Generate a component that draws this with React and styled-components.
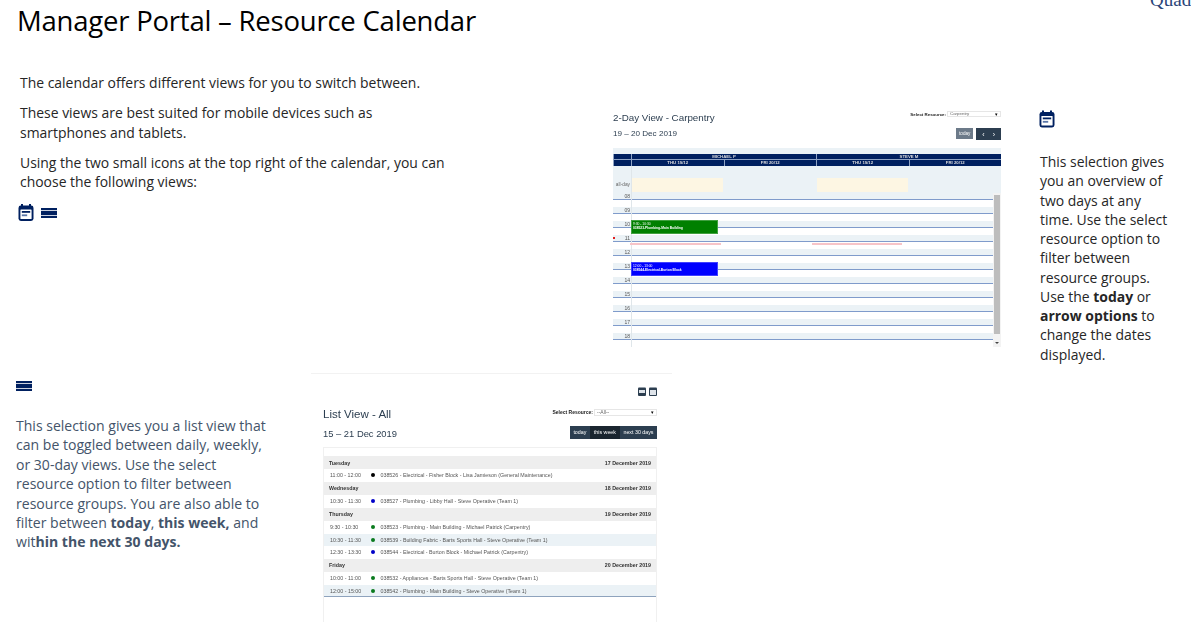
import React from "react";
import styled, { createGlobalStyle } from "styled-components";

const Global = createGlobalStyle`
  html, body { margin: 0; padding: 0; background: #fff; }
  body { font-family: "Open Sans", "Liberation Sans", sans-serif; overflow: hidden; }
  * { box-sizing: border-box; }
`;

const Page = styled.div`
  position: relative; width: 1191px; height: 622px; overflow: hidden; background: #fff;
  display: flex; flex-direction: column;
`;
const LogoText = styled.div`
  position: absolute; right: 0; top: -10px; width: 41px; overflow: hidden; white-space: nowrap;
  font: 19px/20px "Liberation Serif", serif; color: #2a4478;
`;
const Title = styled.h1`
  margin: 0; height: 73px; padding: 3px 0 0 17px; font-weight: 400; font-size: 27.5px; line-height: 36px;
  color: #000; font-family: "Open Sans", sans-serif; letter-spacing: -0.22px;
`;
const TopRow = styled.section`
  height: 300px; display: grid; grid-template-columns: 613px 388px 1fr;
`;
const Intro = styled.div`
  padding-left: 20px; width: 450px; display: flex; flex-direction: column; gap: 11px;
`;
const Para = styled.p`
  margin: 0; font-size: 13.95px; line-height: 19.25px; color: ${p => p.$color || "#262626"};
`;
const IconRow = styled.div`
  display: flex; align-items: center; gap: 7px; margin: 2px 0 0 -2px;
`;
const Side = styled.aside`
  padding: 37px 0 0 38px; display: flex; flex-direction: column;
`;
const SideText = styled(Para)`
  margin: 24px 0 0 1px; width: 135px;
`;
const BottomRow = styled.section`
  flex: 1; display: grid; grid-template-columns: 311px 361px;
`;
const BottomLeft = styled.div`
  padding: 7px 0 0 16px; display: flex; flex-direction: column;
`;
const BottomText = styled(Para)`
  margin-top: 24px; width: 256px; color: #44546a; line-height: 19.4px; font-size: 14.05px;
`;

const Shot = styled.div`
  font-family: "Liberation Sans", sans-serif; filter: blur(0.35px); color: #333;
`;
const CalShot = styled(Shot)`
  margin-top: 38px; height: 262px; position: relative; overflow: hidden;
`;
const ShotHead = styled.div`
  display: flex; justify-content: space-between; align-items: ${p => p.$align || "flex-start"};
`;
const ViewTitle = styled.div`
  font-size: ${p => p.$size}px; line-height: ${p => p.$lh}px; color: #2c3e50;
`;
const ListTitle = styled(ViewTitle)`
  padding-top: 3px;
`;
const SelectWrap = styled.div`
  display: flex; align-items: center; gap: 1px; font-weight: 700; font-size: ${p => p.$size}px; color: #222;
`;
const FakeSelect = styled.div`
  width: ${p => p.$w}px; height: ${p => p.$h}px; background: #fff; border: 1px solid #e6e6e6; font-weight: 400; color: #666;
  font-size: ${p => p.$size}px; line-height: ${p => p.$h - 2}px; padding: 0 2px; display: flex; justify-content: space-between;
  & > i { font-style: normal; color: #000; font-size: 5px; }
`;
const BtnGroup = styled.div`
  display: flex; gap: ${p => p.$gap || 0}px;
`;
const Btn = styled.div`
  height: ${p => p.$h}px; padding: 0 ${p => p.$pad}px; display: flex; align-items: center; justify-content: center; gap: 8px;
  background: ${p => p.$bg}; color: #fff; font-size: ${p => p.$size}px; white-space: nowrap;
`;

const Grid = styled.div`
  margin-top: 5px; background: #ebf2f6; height: 199px; position: relative;
  & > * { position: relative; }
`;
const HeadBand = styled.div`
  position: relative; top: 6px; background: #002060; color: #ddd; height: 12px; font-size: 4.3px; font-weight: 700;
`;
const HeadLine = styled.div`
  display: grid; grid-template-columns: 18px 1fr 1fr; height: 6px; line-height: 6px; text-align: center;
  border-bottom: 1px solid #8fa3c4; & > span { border-left: 1px solid #8fa3c4; }
`;
const HeadLineDays = styled(HeadLine)`
  grid-template-columns: 18px 1fr 1fr 1fr 1fr; border-bottom: 0;
`;
const AllDay = styled.div`
  display: grid; grid-template-columns: 18px 92px 93px 92px 1fr; height: 14px; margin-top: 18px;
  font-size: 4.8px; color: #666; text-align: right; line-height: 14px;
  & > span { padding-right: 1px; white-space: nowrap; }
`;
const Cream = styled.div`
  background: ${p => (p.$on ? "#fdf6e3" : "transparent")}; margin-left: 1px;
`;
const HoursWrap = styled.div`
  margin-top: 1px; width: 380px;
`;
const Hour = styled.div`
  height: 14px; display: flex; flex-direction: column;
  &::after { content: ""; height: 7px; background: #fff; }
`;
const HourBand = styled.div`
  height: 7px; border-bottom: 1px solid #7f9bcb; font-size: 5px; line-height: 6px; color: #555;
  & > span { display: block; width: 17px; text-align: right; }
`;
const GutterLine = styled.div`
  position: absolute !important; left: 18px; top: 18px; bottom: 0; width: 1px; background: #dfe6ea;
`;
const Scroll = styled.div`
  position: absolute !important; right: 0; top: 45px; bottom: 0; width: 8px; background: #f3f3f3;
  display: flex; flex-direction: column;
`;
const Thumb = styled.div`
  margin: 2px 1px 0 1px; height: 139px; background: #bdbdbd;
`;
const Arrow = styled.div`
  margin: auto auto 3px; width: 0; height: 0; border-left: 2px solid transparent; border-right: 2px solid transparent; border-top: 2px solid #444;
`;
const EventBox = styled.div`
  position: absolute !important; left: 18px; width: 87px; height: 13.5px; top: ${p => p.$top}px; background: ${p => p.$bg};
  color: #fff; font-size: 3.3px; line-height: 4.4px; padding: 0.5px 0 0 1px; border: 1px solid rgba(255,255,255,.25);
  & > b { display: block; }
`;
const Pink = styled.div`
  position: absolute !important; top: 95px; left: ${p => p.$left}px; width: ${p => p.$w}px; height: 2px; background: #f7c4c8;
`;
const NowDot = styled.div`
  position: absolute !important; left: 0; top: 89px; width: 2px; height: 2px; background: #e02020;
`;

const ListShot = styled(Shot)`
  border-top: 1px solid #f2f2f2; padding: 14px 15px 0 12px; height: 249px;
`;
const MiniIcons = styled.div`
  display: flex; justify-content: flex-end; gap: 3px; height: 9px; margin-top: -1px;
`;
const ListHead = styled(ShotHead)`
  margin-top: 9px; height: 14px; align-items: center;
`;
const ListHead2 = styled(ShotHead)`
  margin-top: 6px; height: 14px; align-items: center;
`;
const ListBox = styled.div`
  margin-top: 8px; padding-top: 8px; height: 180px; border: 1px solid #f0f0f0; border-bottom: 0;
`;
const DayRow = styled.div`
  height: ${p => p.$h || 13}px; background: #eee; display: flex; justify-content: space-between; align-items: center;
  padding: 0 5px; font-size: 5.3px; font-weight: 700; color: #333;
`;
const EvRow = styled.div`
  height: ${p => p.$h || 12.6}px; display: flex; align-items: center; padding-left: 6px; font-size: 5.3px; color: #555;
  background: ${p => (p.$alt ? "#ebf2f6" : "#fff")};
  border-bottom: ${p => (p.$last ? "1px solid #8ea3bd" : "0")};
`;
const EvTime = styled.span`
  width: 41px; flex: none;
`;
const Dot = styled.i`
  width: 4px; height: 4px; border-radius: 50%; background: ${p => p.$c}; margin-right: 5.5px; flex: none;
`;

const CalIcon = ({ w = 16, h = 17 }) => (
  <svg width={w} height={h} viewBox="0 0 16 17">
    <rect x="3" y="0" width="2" height="3" fill="#002060" />
    <rect x="11" y="0" width="2" height="3" fill="#002060" />
    <rect x="0.5" y="1.5" width="15" height="15.5" rx="2.4" fill="#002060" />
    <rect x="2.4" y="5.4" width="11.2" height="9.7" rx="0.6" fill="#fff" />
    <rect x="3.8" y="7" width="8.4" height="1.8" fill="#002060" />
    <rect x="3.8" y="10.4" width="5.4" height="1.8" fill="#5a76a8" />
  </svg>
);
const ListIcon = ({ w = 16, h = 10 }) => (
  <svg width={w} height={h} viewBox="0 0 16 10">
    <rect x="0" y="0" width="16" height="2" fill="#002060" />
    <rect x="0" y="2.8" width="16" height="4.4" fill="#002060" />
    <rect x="0" y="8" width="16" height="2" fill="#002060" />
  </svg>
);
const MiniCal = ({ light }) => (
  <svg width="8" height="9" viewBox="0 0 8 9">
    <rect x="0" y="0.5" width="8" height="8.5" rx="1" fill="#2c3e50" />
    <rect x="1" y="3" width="6" height={light ? 5 : 3} fill="#dfe4ea" />
  </svg>
);

const hours = ["08", "09", "10", "11", "12", "13", "14", "15", "16", "17", "18"];

const listData = [
  { day: "Tuesday", date: "17 December 2019", rows: [
    { t: "11:00 - 12:00", c: "#000", x: "038526 - Electrical - Fisher Block - Lisa Jamieson (General Maintenance)" } ] },
  { day: "Wednesday", date: "18 December 2019", rows: [
    { t: "10:30 - 11:30", c: "#0000c8", x: "038527 - Plumbing - Libby Hall - Steve Operative (Team 1)" } ] },
  { day: "Thursday", date: "19 December 2019", rows: [
    { t: "9:30 - 10:30", c: "#0a7a1e", x: "038523 - Plumbing - Main Building - Michael Patrick (Carpentry)" },
    { t: "10:30 - 11:30", c: "#0a7a1e", x: "038539 - Building Fabric - Barts Sports Hall - Steve Operative (Team 1)", alt: true },
    { t: "12:30 - 13:30", c: "#0000c8", x: "038544 - Electrical - Burton Block - Michael Patrick (Carpentry)" } ] },
  { day: "Friday", date: "20 December 2019", rows: [
    { t: "10:00 - 11:00", c: "#0a7a1e", x: "038532 - Appliances - Barts Sports Hall - Steve Operative (Team 1)" },
    { t: "12:00 - 15:00", c: "#0a7a1e", x: "038542 - Plumbing - Main Building - Steve Operative (Team 1)", alt: true, last: true } ] },
];

export default function App() {
  return (
    <Page>
      <Global />
      <LogoText>Quad</LogoText>
      <Title>Manager Portal – Resource Calendar</Title>
      <TopRow>
        <Intro>
          <Para>The calendar offers different views for you to switch between.</Para>
          <Para>These views are best suited for mobile devices such as smartphones and tablets.</Para>
          <Para>Using the two small icons at the top right of the calendar, you can choose the following views:</Para>
          <IconRow><CalIcon /><ListIcon /></IconRow>
        </Intro>
        <CalShot>
          <ShotHead>
            <ViewTitle $size={9.8} $lh={14}>2-Day View - Carpentry</ViewTitle>
            <SelectWrap $size={4.4}>Select Resource:
              <FakeSelect $w={54} $h={6} $size={4.4}>Carpentry<i>▾</i></FakeSelect>
            </SelectWrap>
          </ShotHead>
          <ShotHead $align="center">
            <ViewTitle $size={8.1} $lh={18}>19 – 20 Dec 2019</ViewTitle>
            <BtnGroup $gap={3}>
              <Btn $h={11} $pad={3} $bg="#6c7a89" $size={4.6}>today</Btn>
              <Btn $h={12} $pad={6} $bg="#2c3e50" $size={7}><span>‹</span><span>›</span></Btn>
            </BtnGroup>
          </ShotHead>
          <Grid>
            <HeadBand>
              <HeadLine><span /><span>MICHAEL P</span><span>STEVE M</span></HeadLine>
              <HeadLineDays><span /><span>THU 19/12</span><span>FRI 20/12</span><span>THU 19/12</span><span>FRI 20/12</span></HeadLineDays>
            </HeadBand>
            <AllDay>
              <span>all-day</span><Cream $on /><Cream /><Cream $on /><Cream />
            </AllDay>
            <HoursWrap>
              {hours.map(h => (
                <Hour key={h}><HourBand><span>{h}</span></HourBand></Hour>
              ))}
            </HoursWrap>
            <GutterLine />
            <Pink $left={17} $w={91} />
            <Pink $left={199} $w={90} />
            <NowDot />
            <EventBox $top={72} $bg="#008000"><span>9:30 - 10:30</span><b>038523-Plumbing-Main Building</b></EventBox>
            <EventBox $top={114} $bg="#0000ff"><span>12:00 - 13:00</span><b>038544-Electrical-Burton Block</b></EventBox>
            <Scroll><Thumb /><Arrow /></Scroll>
          </Grid>
        </CalShot>
        <Side>
          <CalIcon w={16} h={18} />
          <SideText>This selection gives you an overview of two days at any time. Use the select resource option to filter between resource groups. Use the <b>today</b> or <b>arrow options</b> to change the dates displayed.</SideText>
        </Side>
      </TopRow>
      <BottomRow>
        <BottomLeft>
          <ListIcon w={16} h={12} />
          <BottomText>This selection gives you a list view that can be toggled between daily, weekly, or 30-day views. Use the select resource option to filter between resource groups. You are also able to filter between <b>today</b>, <b>this week,</b> and wit<b>hin the next 30 days.</b></BottomText>
        </BottomLeft>
        <ListShot>
          <MiniIcons><MiniCal /><MiniCal light /></MiniIcons>
          <ListHead>
            <ListTitle $size={11.5} $lh={14}>List View - All</ListTitle>
            <SelectWrap $size={5}>Select Resource:
              <FakeSelect $w={63} $h={7} $size={5}>--All--<i>▾</i></FakeSelect>
            </SelectWrap>
          </ListHead>
          <ListHead2>
            <ListTitle $size={9.4} $lh={14}>15 – 21 Dec 2019</ListTitle>
            <BtnGroup>
              <Btn $h={13} $pad={3.5} $bg="#2c3e50" $size={5.3}>today</Btn>
              <Btn $h={13} $pad={4} $bg="#1a252f" $size={5.3}>this week</Btn>
              <Btn $h={13} $pad={3.5} $bg="#2c3e50" $size={5.3}>next 30 days</Btn>
            </BtnGroup>
          </ListHead2>
          <ListBox>
            {listData.map(d => (
              <React.Fragment key={d.day}>
                <DayRow $h={d.day === "Tuesday" ? 13 : 13.4}><span>{d.day}</span><span>{d.date}</span></DayRow>
                {d.rows.map(r => (
                  <EvRow key={r.x} $alt={r.alt} $last={r.last}>
                    <EvTime>{r.t}</EvTime><Dot $c={r.c} />{r.x}
                  </EvRow>
                ))}
              </React.Fragment>
            ))}
          </ListBox>
        </ListShot>
      </BottomRow>
    </Page>
  );
}
